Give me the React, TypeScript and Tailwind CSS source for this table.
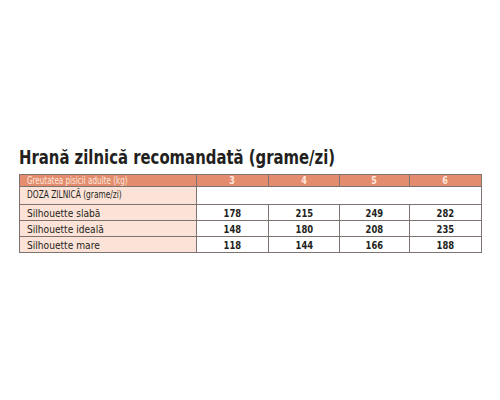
import React from 'react';

const rows = [
    { label: 'Silhouette slabă', values: [178, 215, 249, 282] },
    { label: 'Silhouette ideală', values: [148, 180, 208, 235] },
    { label: 'Silhouette mare', values: [118, 144, 166, 188] },
];

const weights = [3, 4, 5, 6];

// narrow the stock condensed face to the look of the print font
const Squeeze = ({ children, className = '' }: { children: React.ReactNode; className?: string }) => (
    <span className={`inline-block whitespace-nowrap ${className}`}>{children}</span>
);

const App = () => {
    return (
        <div
            className="h-[400px] w-[500px] overflow-hidden bg-white px-[19px] pt-[145px] text-[#231f20]"
            style={{ fontFamily: '"DejaVu Sans Condensed", "DejaVu Sans", sans-serif' }}
        >
            <h1 className="h-[24px] text-[19px] font-bold leading-[24px]">
                <Squeeze className="origin-left scale-x-[0.87]">Hrană zilnică recomandată (grame/zi)</Squeeze>
            </h1>
            <table className="mt-[5px] w-[462px] table-fixed border-collapse">
                <colgroup>
                    <col className="w-[177px]" />
                    <col className="w-[72px]" />
                    <col className="w-[71px]" />
                    <col className="w-[70px]" />
                    <col className="w-[72px]" />
                </colgroup>
                <thead>
                    <tr className="h-[11px] bg-[#e48c6e] text-[#fde8de]">
                        <th className="overflow-hidden border border-[#7d7370] p-0 pl-[7px] text-left text-[10px] font-normal leading-[10px]">
                            <Squeeze className="origin-left scale-x-[0.8]">Greutatea pisicii adulte (kg)</Squeeze>
                        </th>
                        {weights.map((w) => (
                            <th
                                key={w}
                                className="border border-[#7d7370] p-0 pt-[1px] text-center text-[10px] font-bold leading-[10px]"
                            >
                                <Squeeze className="scale-x-[0.9]">{w}</Squeeze>
                            </th>
                        ))}
                    </tr>
                </thead>
                <tbody>
                    <tr className="h-[18px]">
                        <td className="border border-[#7d7370] bg-[#fde3d7] p-0 pl-[7px] pt-[2px] align-top text-[10px] leading-[12px]">
                            <Squeeze className="origin-left scale-x-[0.83]">DOZA ZILNICĂ (grame/zi)</Squeeze>
                        </td>
                        <td colSpan={4} className="border border-[#7d7370] bg-white p-0" />
                    </tr>
                    {rows.map((r) => (
                        <tr key={r.label} className="h-[16px]">
                            <td className="border border-[#7d7370] bg-[#fde3d7] p-0 pl-[7px] pt-[1px] text-[11px] leading-[13px]">
                                <Squeeze className="origin-left scale-x-[0.92]">{r.label}</Squeeze>
                            </td>
                            {r.values.map((v, i) => (
                                <td
                                    key={i}
                                    className="border border-[#7d7370] bg-white p-0 pt-[2px] text-center text-[11px] font-bold leading-[13px]"
                                >
                                    <Squeeze className="scale-x-[0.85]">{v}</Squeeze>
                                </td>
                            ))}
                        </tr>
                    ))}
                </tbody>
            </table>
        </div>
    );
};

export default App;
